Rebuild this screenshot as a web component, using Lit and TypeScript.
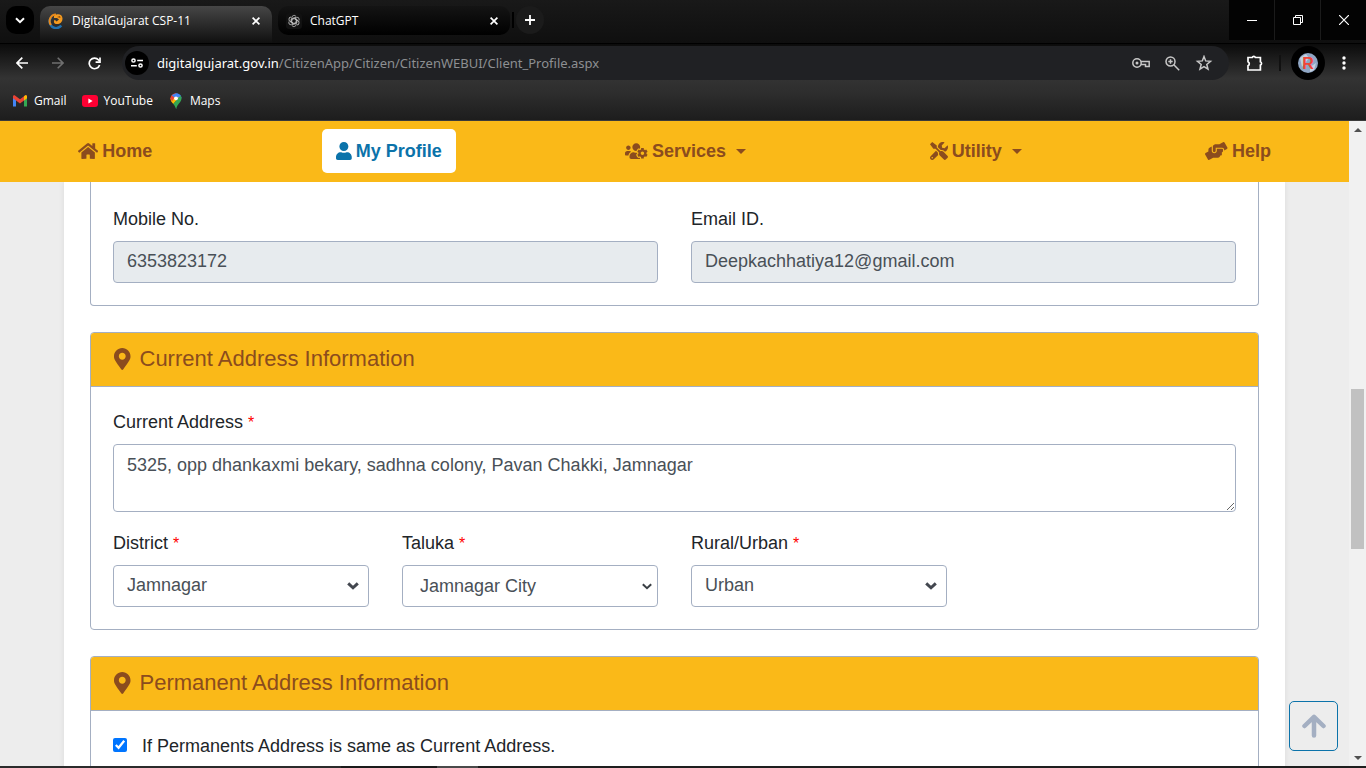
import { LitElement, html, svg, css } from "lit";
import { customElement, property } from "lit/decorators.js";

const FA = {
  home: { w: 576, d: "M280.37 148.26L96 300.11V464a16 16 0 0 0 16 16l112.06-.29a16 16 0 0 0 15.92-16V368a16 16 0 0 1 16-16h64a16 16 0 0 1 16 16v95.64a16 16 0 0 0 16 16.05L464 480a16 16 0 0 0 16-16V300L295.67 148.26a12.19 12.19 0 0 0-15.3 0zM571.6 251.47L488 182.56V44.05a12 12 0 0 0-12-12h-56a12 12 0 0 0-12 12v72.61L318.47 43a48 48 0 0 0-61 0L4.34 251.47a12 12 0 0 0-1.6 16.9l25.5 31A12 12 0 0 0 45.15 301l235.22-193.74a12.19 12.19 0 0 1 15.3 0L530.9 301a12 12 0 0 0 16.9-1.6l25.5-31a12 12 0 0 0-1.7-16.93z" },
  user: { w: 448, d: "M224 256c70.7 0 128-57.3 128-128S294.7 0 224 0 96 57.3 96 128s57.3 128 128 128zm89.6 32h-16.7c-22.2 10.2-46.9 16-72.9 16s-50.6-5.8-72.9-16h-16.7C60.2 288 0 348.2 0 422.4V464c0 26.5 21.5 48 48 48h352c26.5 0 48-21.5 48-48v-41.6c0-74.2-60.2-134.4-134.4-134.4z" },
  usersCog: { w: 640, d: "M610.5 341.3c2.6-14.1 2.6-28.5 0-42.6l25.8-14.9c3-1.7 4.3-5.2 3.3-8.5-6.7-21.6-18.2-41.2-33.2-57.4-2.3-2.5-6-3.1-9-1.4l-25.8 14.9c-10.9-9.3-23.4-16.5-36.9-21.3v-29.8c0-3.4-2.4-6.4-5.7-7.1-22.3-5-45-4.8-66.2 0-3.3.7-5.7 3.7-5.7 7.1v29.8c-13.5 4.8-26 12-36.9 21.3l-25.8-14.9c-2.9-1.7-6.7-1.1-9 1.4-15 16.2-26.5 35.8-33.2 57.4-1 3.3.4 6.8 3.3 8.5l25.8 14.9c-2.6 14.1-2.6 28.5 0 42.6l-25.8 14.9c-3 1.7-4.3 5.2-3.3 8.5 6.7 21.6 18.2 41.1 33.2 57.4 2.3 2.5 6 3.1 9 1.4l25.8-14.9c10.9 9.3 23.4 16.5 36.9 21.3v29.8c0 3.4 2.4 6.4 5.7 7.1 22.3 5 45 4.8 66.2 0 3.3-.7 5.7-3.7 5.7-7.1v-29.8c13.5-4.8 26-12 36.9-21.3l25.8 14.9c2.9 1.7 6.7 1.1 9-1.4 15-16.2 26.5-35.8 33.2-57.4 1-3.3-.4-6.8-3.3-8.5l-25.8-14.9zM496 368.5c-26.8 0-48.5-21.8-48.5-48.5s21.8-48.5 48.5-48.5 48.5 21.8 48.5 48.5-21.7 48.5-48.5 48.5zM96 224c35.3 0 64-28.7 64-64s-28.7-64-64-64-64 28.7-64 64 28.7 64 64 64zm224 32c1.9 0 3.7-.5 5.6-.6 8.3-21.7 20.5-42.1 36.3-59.2 7.4-8 17.9-12.6 28.9-12.6 6.9 0 13.7 1.8 19.6 5.3l7.9 4.6c.8-.5 1.6-.9 2.4-1.4 7-14.6 11.2-30.8 11.2-48 0-61.9-50.1-112-112-112S208 82.1 208 144c0 61.9 50.1 112 112 112zm105.2 194.5c-2.3-1.2-4.6-2.6-6.8-3.9-8.2 4.8-15.3 9.8-27.5 9.8-10.9 0-21.4-4.6-28.9-12.6-18.3-19.8-32.3-43.9-40.2-69.6-10.7-34.5 24.9-49.7 25.8-50.3-.1-2.6-.1-5.2 0-7.8l-7.9-4.6c-3.8-2.2-7-5-9.8-8.1-3.3.2-6.5.6-9.8.6-24.6 0-47.6-6-68.5-16h-8.3C179.6 288 128 339.6 128 403.2V432c0 26.5 21.5 48 48 48h255.4c-3.7-6-6.2-12.8-6.2-20.3v-9.2zM173.1 274.6C161.5 263.1 145.6 256 128 256H64c-35.3 0-64 28.7-64 64v32c0 17.7 14.3 32 32 32h65.9c6.3-47.4 34.9-87.3 75.2-109.4z" },
  tools: { w: 512, d: "M501.1 395.7L384 278.6c-23.1-23.1-57.6-27.6-85.4-13.9L192 158.1V96L64 0 0 64l96 128h62.1l106.6 106.6c-13.6 27.8-9.2 62.3 13.9 85.4l117.1 117.1c14.6 14.6 38.2 14.6 52.7 0l52.7-52.7c14.5-14.6 14.5-38.2 0-52.7zM331.7 225c28.3 0 54.9 11 74.9 31l19.4 19.4c15.8-6.9 30.8-16.5 43.8-29.5 37.1-37.1 49.7-89.3 37.9-136.7-2.2-9-13.5-12.1-20.1-5.5l-74.4 74.4-67.9-11.3L334 98.9l74.4-74.4c6.6-6.6 3.4-17.9-5.7-20.2-47.4-11.7-99.6.9-136.6 37.9-28.5 28.5-41.9 66.1-41.2 103.6l82.1 82.1c8.1-1.9 16.5-2.9 24.7-2.9zm-103.9 82l-56.7-56.7L18.7 402.8c-25 25-25 65.5 0 90.5s65.5 25 90.5 0l123.6-123.6c-7.6-19.9-9.9-41.6-5-62.7zM64 472c-13.2 0-24-10.8-24-24 0-13.3 10.7-24 24-24s24 10.7 24 24c0 13.2-10.7 24-24 24z" },
  hands: { w: 640, d: "M488 192H336v56c0 39.7-32.3 72-72 72s-72-32.3-72-72V126.4l-64.9 39C107.8 176.9 96 197.8 96 220.2v47.3l-80 46.2C.7 322.5-4.6 342.1 4.3 357.4l80 138.6c8.8 15.3 28.4 20.5 43.7 11.7L231.4 448H368c35.3 0 64-28.7 64-64h16c17.7 0 32-14.3 32-32v-64h8c13.3 0 24-10.7 24-24v-48c0-13.3-10.7-24-24-24zm147.7-37.4L555.7 16C546.9.7 527.3-4.5 512 4.3L408.6 64H306.4c-12 0-23.7 3.4-33.9 9.7L239 94.6c-9.4 5.8-15 16.1-15 27.1V248c0 22.1 17.9 40 40 40s40-17.9 40-40v-88h184c30.9 0 56 25.1 56 56v28.5l80-46.2c15.3-8.9 20.5-28.4 11.7-43.7z" },
  pin: { w: 384, d: "M172.268 501.67C26.97 291.031 0 269.413 0 192 0 85.961 85.961 0 192 0s192 85.961 192 192c0 77.413-26.97 99.031-172.268 309.67-9.535 13.774-29.93 13.773-39.464 0zM192 272c44.183 0 80-35.817 80-80s-35.817-80-80-80-80 35.817-80 80 35.817 80 80 80z" },
};

const solid = (name: keyof typeof FA, size: number) => html`<svg
  width=${(FA[name].w / 512) * size} height=${size} viewBox="0 0 ${FA[name].w} 512" fill="currentColor" aria-hidden="true">
  ${svg`<path d=${FA[name].d}></path>`}</svg>`;

const closeGlyph = html`<svg width="8" height="8" viewBox="0 0 8 8" fill="none" stroke="currentColor" stroke-width="1.7"><path d="M.6.6l6.800 6.800M7.400.6L.6 7.400"/></svg>`;

@customElement("browser-chrome")
export class BrowserChrome extends LitElement {
  static styles = css`
    :host { display: block; color: #fff; font: 12px/16px "Open Sans", "Noto Sans", sans-serif; }
    button { border: 0; padding: 0; margin: 0; background: none; color: inherit; font: inherit; display: flex; align-items: center; justify-content: center; }
    svg { display: block; flex: none; }
    a { color: inherit; text-decoration: none; }
    .tabs { display: flex; height: 43px; background: linear-gradient(#191919, #0f0f0f); align-items: flex-start; }
    .search { width: 28px; height: 28px; margin: 6px 6px 0; border-radius: 10px; background: #000; }
    .tab { display: flex; align-items: center; width: 232px; box-sizing: border-box; padding: 0 11px 0 8px; }
    .tab.active { height: 37px; margin-top: 6px; padding-bottom: 8px; border-radius: 10px 10px 0 0; background: linear-gradient(#464646, #101010); }
    .tab.idle { height: 29px; margin: 6px 0 0 6px; border-radius: 10px; background: linear-gradient(#141414, #000); }
    .title { flex: 1; justify-content: flex-start; gap: 8px; }
    .close { width: 10px; height: 16px; }
    .bar { width: 2px; height: 16px; margin: 12px 2px 0; background: #000; }
    .new { width: 28px; height: 28px; margin-top: 6px; border-radius: 14px; background: #1b1b1b; }
    .window { display: flex; gap: 1px; margin-left: auto; background: #1b1b1b; }
    .window button { width: 45px; height: 40px; background: #030303; }
    .lower { border-top: 1px solid #000; background: linear-gradient(#0b0b0b, #333 45%, #2d2d2d 65%, #1d1d1d); border-bottom: 1px solid #3a3a3a; }
    .toolbar { display: flex; align-items: center; height: 36px; padding: 1px 14px 0; }
    .nav { display: flex; gap: 20px; padding: 0 20px 0 0; }
    .nav button { width: 16px; height: 16px; }
    .omni { flex: 1; display: flex; align-items: center; height: 34px; border-radius: 17px; background: #202124; box-sizing: border-box; padding: 0 16px 0 3px; }
    .site { width: 24px; height: 24px; border-radius: 12px; background: #000; }
    .url { flex: 1; margin-left: 8px; font-family: "Noto Sans", sans-serif; font-size: 13px; color: #8d8f92; white-space: nowrap; }
    .url b { font-weight: 400; color: #fff; }
    .inside { display: flex; gap: 15px; color: #c7c7c7; }
    .ext { margin-left: 17px; width: 18px; height: 18px; }
    .sep { width: 2px; height: 16px; margin: 0 10px 0 15px; background: #111; }
    .avatar { width: 34px; height: 34px; border-radius: 17px; background: #000; }
    .menu { width: 6px; height: 18px; margin: 0 5px 0 16px; }
    .marks { display: flex; height: 39px; align-items: center; gap: 15px; padding: 0 12px; }
    .marks a { display: flex; align-items: center; gap: 6px; }
  `;

  render() {
    return html`
      <div class="tabs">
        <button class="search" aria-label="Search tabs"><svg width="10" height="7" viewBox="0 0 10 7" fill="none" stroke="#fff" stroke-width="2"><path d="M1 1.2l4 4 4-4"/></svg></button>
        <div class="tab active">
          <button class="title">
            <svg width="16" height="16" viewBox="0 0 16 16" fill="none">
              <path d="M3 4.500A6.300 6.300 0 0 0 13.300 12.600" stroke="#1f6fae" stroke-width="2.400"/>
              <path d="M3 12A6.500 6.500 0 0 1 8 1.500" stroke="#e98a1c" stroke-width="2"/>
              <path d="M6 3C9 0 14.500 1 14.500 5.500C14.500 9.500 11.500 11.500 8 11C5.500 10.500 5.500 8 6.800 6.800L8.500 8.500L11 6.500L9 5L6 5Z" fill="#f39a1f"/>
              <path d="M9 4l3-1 .5 2z" fill="#8a4a12"/>
            </svg>
            DigitalGujarat CSP-11
          </button>
          <button class="close" aria-label="Close tab">${closeGlyph}</button>
        </div>
        <div class="tab idle">
          <button class="title">
            <svg width="16" height="16" viewBox="0 0 16 16" fill="none" stroke="#b9b9b9" stroke-width="0.900">
              <rect x="0" y="0" width="16" height="16" rx="3" fill="#111" stroke="none"/>
              ${[0, 60, 120, 180, 240, 300].map((a) => svg`<path transform="rotate(${a} 8 8)" d="M5.800 8.200V4.700a2.300 2.300 0 0 1 4.100-1.400M5.800 6.700l2.800-1.700 2.500 1.500"/>`)}
            </svg>
            ChatGPT
          </button>
          <button class="close" aria-label="Close tab">${closeGlyph}</button>
        </div>
        <span class="bar"></span>
        <button class="new" aria-label="New tab"><svg width="10" height="10" viewBox="0 0 10 10" stroke="#fff" stroke-width="1.800"><path d="M5 0v10M0 5h10"/></svg></button>
        <div class="window">
          <button aria-label="Minimize"><svg width="10" height="10" viewBox="0 0 10 10"><path d="M0 5h10v1H0z" fill="#fff"/></svg></button>
          <button aria-label="Restore"><svg width="10" height="10" viewBox="0 0 10 10" fill="none" stroke="#fff"><path d="M.5 2.500h7v7h-7zM2.500 2.500v-2h7v7h-2"/></svg></button>
          <button aria-label="Close"><svg width="10" height="10" viewBox="0 0 10 10" stroke="#fff" stroke-width="1.200"><path d="M0 0l10 10M10 0L0 10"/></svg></button>
        </div>
      </div>
      <div class="lower">
        <div class="toolbar">
          <div class="nav">
            <button aria-label="Back"><svg width="12" height="12" viewBox="0 0 12 12" fill="none" stroke="#fff" stroke-width="1.700"><path d="M12 6H1M6.300.7L1 6l5.300 5.300"/></svg></button>
            <button aria-label="Forward"><svg width="12" height="12" viewBox="0 0 12 12" fill="none" stroke="#6f6f6f" stroke-width="1.600"><path d="M0 6h11M5.700.7L11 6l-5.300 5.300"/></svg></button>
            <button aria-label="Reload"><svg width="13" height="13" viewBox="0 0 13 13" fill="none" stroke="#fff" stroke-width="1.700"><path d="M11.600 8A5.300 5.300 0 1 1 10.600 3L11.500 4"/><path d="M12 .6v4.500H7.600"/></svg></button>
          </div>
          <div class="omni">
            <button class="site" aria-label="Site information"><svg width="12" height="10" viewBox="0 0 12 10" fill="none" stroke="#fff" stroke-width="1.500"><circle cx="2.500" cy="2.500" r="1.600"/><path d="M6.200 2.500H12M0 7.800h5.800"/><circle cx="9.500" cy="7.500" r="1.600"/></svg></button>
            <div class="url"><b>digitalgujarat.gov.in</b>/CitizenApp/Citizen/CitizenWEBUI/Client_Profile.aspx</div>
            <div class="inside">
              <button aria-label="Passwords"><svg width="18" height="12" viewBox="0 0 18 12" fill="none" stroke="currentColor" stroke-width="1.500"><circle cx="5" cy="6" r="4.200"/><path d="M9 4.500h8.200v5H13.500V7.500H9"/><circle cx="5" cy="6" r="1.500" fill="currentColor" stroke="none"/></svg></button>
              <button aria-label="Zoom"><svg width="15" height="15" viewBox="0 0 15 15" fill="none" stroke="currentColor" stroke-width="1.500"><circle cx="5.500" cy="5.500" r="4.500"/><path d="M8.800 8.800l5.400 5.400M5.500 3.300v4.400M3.300 5.500h4.400"/></svg></button>
              <button aria-label="Bookmark"><svg width="18" height="16" viewBox="0 0 18 16" fill="none" stroke="currentColor" stroke-width="1.500"><path d="M9 1.500l1.700 4.400 4.800.4-3.700 3.100 1.200 4.700L9 11.600l-4 2.500 1.200-4.700-3.700-3.100 4.800-.4z"/></svg></button>
            </div>
          </div>
          <button class="ext" aria-label="Extensions"><svg width="18" height="18" viewBox="0 0 18 18" fill="none" stroke="#fff" stroke-width="1.700"><path d="M2 3.500h4.200a1.700 1.700 0 0 1 3.200 0h5v4.300a1.700 1.700 0 0 1 0 3.200v5H2v-4.300a2.200 2.200 0 0 0 0-4z"/></svg></button>
          <span class="sep"></span>
          <button class="avatar" aria-label="Profile">
            <svg width="20" height="20" viewBox="0 0 20 20"><circle cx="10" cy="10" r="10" fill="#8fa6c4"/><path d="M2 5l6-4 3 4-7 9zM12 14l6-4-2 7-4 2z" fill="#c3d0df"/><text x="10" y="16" text-anchor="middle" font-family="Liberation Sans" font-weight="700" font-size="16" fill="#f04437">R</text></svg>
          </button>
          <button class="menu" aria-label="Menu"><svg width="4" height="14" viewBox="0 0 4 14" fill="#fff"><circle cx="2" cy="2" r="1.700"/><circle cx="2" cy="7" r="1.700"/><circle cx="2" cy="12" r="1.700"/></svg></button>
        </div>
        <nav class="marks">
          <a href="#gmail"><svg width="16" height="12" viewBox="0 0 16 12"><path d="M1 1v10.500h3V5z" fill="#4285f4"/><path d="M12 5v6.500h3V1z" fill="#34a853"/><path d="M1 3.200V1.500C1 .4 2.500 0 3.300.7L8 4.200 12.700.7c.8-.7 2.300-.3 2.300.8v1.700L8 8.500z" fill="#ea4335"/><path d="M12 1.200v4.200l3-2.200V1.500C15 .3 13.500 0 12.700.7z" fill="#fbbc04"/></svg>Gmail</a>
          <a href="#youtube"><svg width="16" height="12" viewBox="0 0 16 12"><rect width="16" height="12" rx="3" fill="#f03"/><path d="M6.400 3.500v5l4.200-2.500z" fill="#fff"/></svg>YouTube</a>
          <a href="#maps"><svg width="16" height="16" viewBox="0 0 16 16"><path d="M2.500 5.500C3 2 5.500.3 8 .3L10.500 3 5 9z" fill="#ea4335"/><path d="M4 2L8 .3c3.500 0 5.500 2.500 5.500 5L8 8 3.700 4z" fill="#4285f4"/><path d="M2.500 5.500C2.500 8 4 9.500 5.300 11L11 4.500 4.500 4z" fill="#fbbc04"/><path d="M13.500 5c0 5-4.500 5.500-5.200 11-.5 0-.8-2.500-3-5L12.600 2.500z" fill="#34a853"/><path d="M2.500 5.500c0-1.500.5-2.500 1.200-3.300L6.500 4.500 4 8.500z" fill="#ea4335"/><circle cx="8" cy="5.300" r="1.900" fill="#fff"/></svg>Maps</a>
        </nav>
      </div>
    `;
  }
}

@customElement("info-card")
export class InfoCard extends LitElement {
  @property() heading = "";

  static styles = css`
    :host { display: block; border: 1px solid #a4afc2; border-radius: 4px; overflow: hidden; }
    :host([continued]) { border-top: 0; border-radius: 0 0 4px 4px; }
    h2 { display: flex; align-items: center; gap: 9px; box-sizing: border-box; margin: 0; padding: 0 22px 2px 23px; height: 54px; font-weight: 400; font-size: 22px; line-height: 26px; color: #8b4c1e; background: #fab918; border-bottom: 1px solid #a4afc2; }
    .body { padding: 22px; }
    :host([continued]) .body { padding-top: 24px; }
  `;

  render() {
    return html`${this.heading ? html`<h2>${solid("pin", 22)}<span>${this.heading}</span></h2>` : null}
      <div class="body"><slot></slot></div>`;
  }
}

@customElement("app-root")
export class AppRoot extends LitElement {
  static styles = css`
    :host { display: grid; grid-template-rows: auto minmax(0, 1fr) auto; height: 100vh; overflow: hidden; font: 18px/27px "Liberation Sans", Arial, sans-serif; color: #212529; }
    svg { display: block; flex: none; }
    .view { display: flex; min-height: 0; }
    .page { flex: 1; min-width: 0; position: relative; overflow: hidden; background: #ededed; }
    .menu { position: relative; z-index: 1; display: flex; justify-content: space-between; padding: 8px 64px 9px; background: #fab918; }
    .menu a { display: flex; align-items: center; gap: 4px; height: 44px; padding: 0 14px; border-radius: 5px; font-weight: 700; color: #8b4c1e; text-decoration: none; }
    .menu a.on { background: #fff; color: #0b73aa; }
    .caret { margin-left: 6px; }
    .panel { margin: 0 64px; padding: 0 26px 26px; background: #fff; box-shadow: 0 0 6px rgba(0, 0, 0, 0.08); display: grid; gap: 26px; }
    .grid { display: grid; column-gap: 33px; row-gap: 18px; grid-template-columns: repeat(4, minmax(0, 1fr)); }
    .field { display: grid; gap: 8px; }
    .half { grid-column: span 2; }
    .full { grid-column: 1 / -1; }
    .req { color: #f00; font-size: 16px; line-height: 1; }
    .control { display: block; box-sizing: border-box; width: 100%; height: 42px; margin: 0; padding: 0 13px 2px; border: 1px solid #a4afc2; border-radius: 4px; background: #fff; color: #495057; font: inherit; appearance: none; }
    .control:disabled { background: #e7ebee; opacity: 1; }
    textarea.control { height: 68px; padding: 7px 13px; resize: vertical; }
    .pick { display: grid; align-items: center; }
    .pick > * { grid-area: 1 / 1; }
    .pick svg { justify-self: end; margin-right: 10px; pointer-events: none; }
    .native select { padding: 0 17px; }
    .native svg { margin-right: 6px; }
    .check { display: flex; align-items: flex-start; gap: 15px; }
    .check input { width: 14px; height: 14px; margin: 5px 0 0; flex: none; accent-color: #0075ff; }
    .top { position: absolute; right: 11px; bottom: 15px; width: 49px; height: 50px; padding: 0; display: grid; place-items: center; border: 1px solid #0b73aa; border-radius: 5px; background: #ededed; }
    .scroll { display: flex; flex-direction: column; align-items: center; width: 17px; background: #f1f1f1; }
    .scroll .end { display: grid; place-items: center; width: 17px; height: 17px; }
    .before { flex: 251; }
    .thumb { flex: 160; width: 13px; background: #c1c1c1; }
    .after { flex: 200; }
    .edge { height: 2px; background: linear-gradient(90deg, #2b2b2b 25%, #1a1a1a 25% 32%, #4a4a4a 32% 35%, #1e1e1e 35%); }
  `;

  private chevron(bold: boolean) {
    return bold
      ? html`<svg width="12" height="8" viewBox="0 0 12 8" fill="none" stroke="#43474f" stroke-width="3"><path d="M1.200 1.400L6 5.800l4.800-4.400"/></svg>`
      : html`<svg width="10" height="7" viewBox="0 0 10 7" fill="none" stroke="#3a3f45" stroke-width="2"><path d="M.8 1.200L5 5.200l4.200-4"/></svg>`;
  }

  private select(id: string, label: string, value: string, native = false) {
    return html`<div class="field">
      <label for=${id}>${label} <span class="req">*</span></label>
      <div class="pick ${native ? "native" : ""}">
        <select class="control" id=${id}><option>${value}</option></select>
        ${this.chevron(!native)}
      </div>
    </div>`;
  }

  render() {
    const caret = html`<svg class="caret" width="10" height="5" viewBox="0 0 10 5" fill="currentColor"><path d="M0 0h10L5 5z"/></svg>`;
    return html`
      <browser-chrome></browser-chrome>
      <div class="view">
        <main class="page">
          <nav class="menu">
            <a href="#home">${solid("home", 18)}Home</a>
            <a class="on" href="#profile">${solid("user", 18)}My Profile</a>
            <a href="#services">${solid("usersCog", 18)}Services ${caret}</a>
            <a href="#utility">${solid("tools", 18)}Utility ${caret}</a>
            <a href="#help">${solid("hands", 18)}Help</a>
          </nav>
          <div class="panel">
            <info-card continued>
              <div class="grid">
                <div class="field half"><label for="mobile">Mobile No.</label><input class="control" id="mobile" value="6353823172" disabled /></div>
                <div class="field half"><label for="email">Email ID.</label><input class="control" id="email" value="Deepkachhatiya12@gmail.com" disabled /></div>
              </div>
            </info-card>
            <info-card heading="Current Address Information">
              <div class="grid">
                <div class="field full">
                  <label for="address">Current Address <span class="req">*</span></label>
                  <textarea class="control" id="address" .value=${"5325, opp dhankaxmi bekary, sadhna colony, Pavan Chakki, Jamnagar"}></textarea>
                </div>
                ${this.select("district", "District", "Jamnagar")}
                ${this.select("taluka", "Taluka", "Jamnagar City", true)}
                ${this.select("area", "Rural/Urban", "Urban")}
              </div>
            </info-card>
            <info-card heading="Permanent Address Information">
              <label class="check"><input type="checkbox" checked />If Permanents Address is same as Current Address.</label>
            </info-card>
          </div>
          <button class="top" aria-label="Back to top">
            <svg width="24" height="24" viewBox="0 0 24 24" fill="none" stroke="#a4afc2" stroke-width="4.500" stroke-linecap="round" stroke-linejoin="round"><path d="M12 21.500V3M2.500 12L12 2.800 21.500 12"/></svg>
          </button>
        </main>
        <div class="scroll">
          <span class="end"><svg width="8" height="4" viewBox="0 0 8 4" fill="#505050"><path d="M0 4h8L4 0z"/></svg></span>
          <span class="before"></span><span class="thumb"></span><span class="after"></span>
          <span class="end"><svg width="8" height="4" viewBox="0 0 8 4" fill="#505050"><path d="M0 0h8L4 4z"/></svg></span>
        </div>
      </div>
      <div class="edge"></div>
    `;
  }
}
